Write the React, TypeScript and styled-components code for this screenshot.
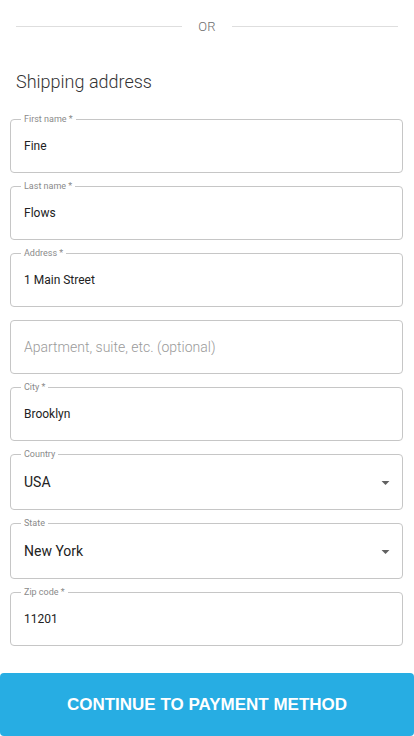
import React from "react";
import styled, { createGlobalStyle } from "styled-components";

const Global = createGlobalStyle`
  html, body { margin: 0; padding: 0; background: #fff; }
  body { font-family: Roboto, "Liberation Sans", Arial, sans-serif; color: #222; }
  * { box-sizing: border-box; }
`;

const Page = styled.div`
  width: 414px;
  display: flex;
  flex-direction: column;
  padding-top: 16px;
`;

const Divider = styled.div`
  display: flex;
  align-items: center;
  gap: 16px;
  height: 20px;
  padding: 0 16px;
`;

const Line = styled.div`
  flex: 1;
  height: 1px;
  background: #dedede;
`;

const OrText = styled.span`
  font-size: 13px;
  font-weight: 300;
  color: #6e6e6e;
  letter-spacing: 0.3px;
`;

const Heading = styled.h2`
  margin: 34px 0 0 16px;
  height: 24px;
  line-height: 24px;
  font-size: 18px;
  font-weight: 300;
  color: #333;
`;

const Form = styled.form`
  display: flex;
  flex-direction: column;
  gap: 8px;
  margin: 20px 11px 0 10px;
`;

const Box = styled.fieldset`
  margin: 0;
  min-width: 0;
  border: 1px solid #c6c6c6;
  border-radius: 4px;
  padding: 0 10px;
`;

const Legend = styled.legend<{ $hidden?: boolean }>`
  padding: 0 3px;
  height: 10px;
  line-height: 10px;
  font-size: 9px;
  color: #8a8a8a;
  white-space: nowrap;
  ${(p) =>
    p.$hidden &&
    `
    visibility: hidden;
    max-width: 0.01px;
    padding: 0;
    overflow: hidden;
  `}
`;

const Row = styled.div<{ $select?: boolean }>`
  display: flex;
  align-items: center;
  height: ${(p) => (p.$select ? "50px" : "48px")};
  padding-bottom: 4px;
`;

const Input = styled.input<{ $large?: boolean }>`
  flex: 1;
  min-width: 0;
  border: none;
  outline: none;
  background: transparent;
  padding: 0 0 0 3px;
  font-family: Roboto, "Liberation Sans", Arial, sans-serif;
  font-size: ${(p) => (p.$large ? "14px" : "12px")};
  color: #222;
  &::placeholder {
    color: #9a9a9a;
    font-size: 14px;
    font-weight: 300;
  }
`;

const SelectValue = styled.div`
  flex: 1;
  padding-left: 3px;
  font-size: 14px;
  color: #222;
`;

const Arrow = styled.svg`
  width: 19px;
  height: 19px;
  margin-right: -3px;
  fill: #616161;
`;

const Button = styled.button`
  margin-top: 27px;
  width: 414px;
  height: 63px;
  border: none;
  border-radius: 4px;
  background: #27ade3;
  color: #fff;
  font-family: "Liberation Sans", Arial, sans-serif;
  font-weight: 700;
  font-size: 17px;
  cursor: pointer;
`;

type TextFieldProps = { label?: string; value?: string; placeholder?: string };

function TextField({ label, value, placeholder }: TextFieldProps) {
  return (
    <Box>
      <Legend $hidden={!label}>{label ?? placeholder}</Legend>
      <Row>
        <Input
          readOnly
          defaultValue={value}
          placeholder={placeholder}
          $large={!label}
        />
      </Row>
    </Box>
  );
}

function SelectField({ label, value }: { label: string; value: string }) {
  return (
    <Box>
      <Legend>{label}</Legend>
      <Row $select>
        <SelectValue>{value}</SelectValue>
        <Arrow viewBox="0 0 24 24">
          <path d="M7 10l5 5 5-5z" />
        </Arrow>
      </Row>
    </Box>
  );
}

export default function App() {
  return (
    <>
      <Global />
      <Page>
        <Divider>
          <Line />
          <OrText>OR</OrText>
          <Line />
        </Divider>
        <Heading>Shipping address</Heading>
        <Form onSubmit={(e) => e.preventDefault()}>
          <TextField label="First name *" value="Fine" />
          <TextField label="Last name *" value="Flows" />
          <TextField label="Address *" value="1 Main Street" />
          <TextField placeholder="Apartment, suite, etc. (optional)" />
          <TextField label="City *" value="Brooklyn" />
          <SelectField label="Country" value="USA" />
          <SelectField label="State" value="New York" />
          <TextField label="Zip code *" value="11201" />
        </Form>
        <Button type="button">CONTINUE TO PAYMENT METHOD</Button>
      </Page>
    </>
  );
}
